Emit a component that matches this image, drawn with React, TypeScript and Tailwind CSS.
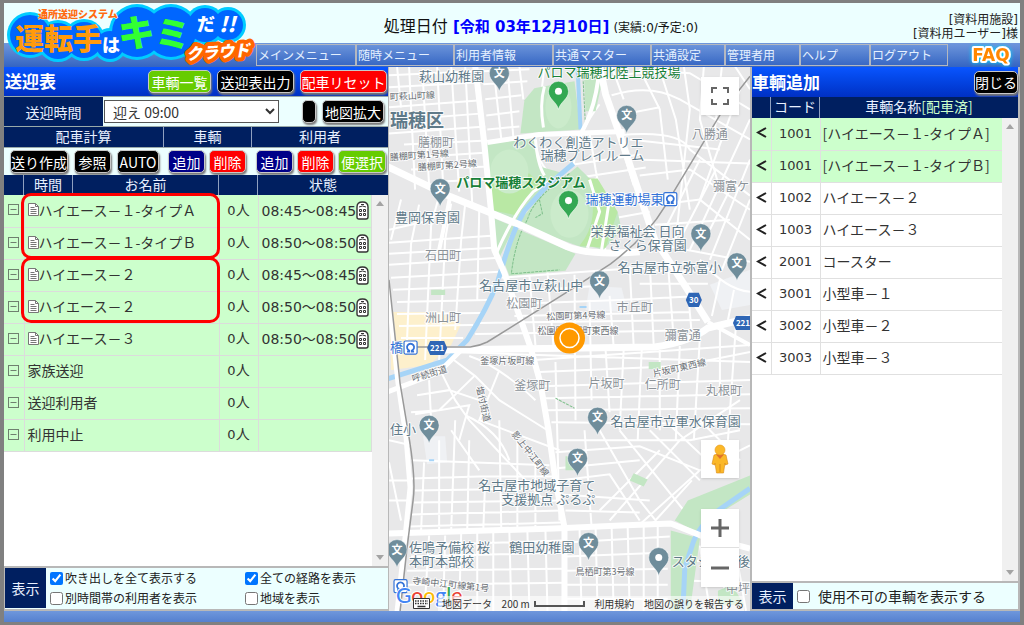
import type { ReactNode } from "react";
import clsx from "clsx";

const menuItems = [
  { label: "メインメニュー", width: "w-[98px]" },
  { label: "随時メニュー", width: "w-[98px]" },
  { label: "利用者情報", width: "w-[99px]" },
  { label: "共通マスター", width: "w-[98px]" },
  { label: "共通設定", width: "w-[74px]" },
  { label: "管理者用", width: "w-[75px]" },
  { label: "ヘルプ", width: "w-[70px]" },
  { label: "ログアウト", width: "w-[78px]" },
];

const routes = [
  { name: "ハイエース－１-タイプＡ", time: "08:45～08:45" },
  { name: "ハイエース－１-タイプＢ", time: "08:50～08:50" },
  { name: "ハイエース－２", time: "08:45～08:45" },
  { name: "ハイエース－２", time: "08:50～08:50" },
  { name: "ハイエース－３", time: "08:50～08:50" },
  { name: "家族送迎" },
  { name: "送迎利用者" },
  { name: "利用中止" },
];

const vehicles = [
  { code: "1001", name: "[ハイエース－１-タイプＡ]", assigned: true },
  { code: "1001", name: "[ハイエース－１-タイプＢ]", assigned: true },
  { code: "1002", name: "ハイエース－２" },
  { code: "1003", name: "ハイエース－３" },
  { code: "2001", name: "コースター" },
  { code: "3001", name: "小型車－１" },
  { code: "3002", name: "小型車－２" },
  { code: "3003", name: "小型車－３" },
];

const displayOptions = [
  { id: "balloon", label: "吹き出しを全て表示する", checked: true },
  { id: "allRoutes", label: "全ての経路を表示", checked: true },
  { id: "otherTime", label: "別時間帯の利用者を表示", checked: false },
  { id: "area", label: "地域を表示", checked: false },
];

const tones = {
  black: "bg-black",
  green: "bg-[#66cc00]",
  red: "bg-[#ff0000]",
  navy: "bg-[#000088]",
};

function Btn({ tone, width, children, label }: { tone: keyof typeof tones; width: string; children?: ReactNode; label?: string }) {
  return (
    <button
      type="button"
      aria-label={label}
      className={clsx(
        "flex h-[23px] shrink-0 items-center justify-center rounded-[5px] border border-[#c8c8c8] whitespace-nowrap text-white shadow-[1px_2px_2px_#777]",
        tones[tone],
        width
      )}
    >
      {children}
    </button>
  );
}

function Logo() {
  const blobs = [
    [30, 35, 20],
    [58, 41, 18],
    [84, 40, 18],
    [110, 45, 14],
    [137, 32, 25],
    [171, 32, 25],
    [205, 25, 17],
    [228, 25, 15],
  ];
  return (
    <svg viewBox="4 3 256 66" className="absolute top-0 left-0 h-[66px] w-[256px]" role="img" aria-label="運転手はキミだ!!クラウド">
      <g fill="#00ccff">
        {blobs.map(([x, y, r]) => (
          <circle key={x} cx={x} cy={y} r={r + 3} />
        ))}
      </g>
      <g fill="#0066ff">
        {blobs.map(([x, y, r]) => (
          <circle key={x} cx={x} cy={y} r={r} />
        ))}
      </g>
      <g fontWeight="900">
        <text x="38" y="18" fontSize="10" fill="#ff6a10" stroke="#ecffff" strokeWidth="1" paintOrder="stroke">
          通所送迎システム
        </text>
        <text x="15" y="50" fontSize="29" fill="#ff9a0c">
          運転手
        </text>
        <text x="102" y="52" fontSize="18" fill="#fff">
          は
        </text>
        <text x="118" y="47" fontSize="37" fill="#33ff33">
          キ
        </text>
        <text x="155" y="47" fontSize="35" fill="#33ff33">
          ミ
        </text>
        <text x="197" y="31" fontSize="18" fill="#fff">
          だ
        </text>
        <text x="219" y="32" fontSize="21" fill="#fff" fontStyle="italic">
          !!
        </text>
        <text
          x="186"
          y="58"
          fontSize="16"
          fill="#fff"
          stroke="#ff6600"
          strokeWidth="8"
          strokeLinejoin="round"
          paintOrder="stroke"
          fontStyle="italic"
          transform="rotate(-4 216 52)"
        >
          クラウド
        </text>
      </g>
    </svg>
  );
}

function Header() {
  return (
    <header className="relative">
      <div className="relative flex h-10 items-center justify-center bg-[#ecffff] pt-2 pl-[58px] font-['DejaVu_Sans','Noto_Sans_CJK_JP',sans-serif]">
        <p className="whitespace-nowrap text-[#111]">
          <span className="text-base">処理日付 </span>
          <strong className="text-[15px] font-bold text-[#0000ff]">[令和 03年12月10日]</strong>
          <span className="ml-1 text-xs">(実績:0/予定:0)</span>
        </p>
        <p className="absolute right-0.5 bottom-0.5 text-right text-xs leading-[14px] text-[#222]">
          [資料用施設]
          <br />
          [資料用ユーザー]様
        </p>
      </div>
      <nav className="flex h-6 items-center bg-linear-to-b from-[#6f97dc] to-[#3464c2] pl-[252px]">
        <ul className="flex h-[22px] border border-[#b4b8c0]">
          {menuItems.map((item, i) => (
            <li key={item.label} className={clsx(item.width, i > 0 && "border-l-2 border-[#b4b8c0]")}>
              <a href="#" className="block pl-px text-xs leading-5 whitespace-nowrap text-[#e4f0ff]">
                {item.label}
              </a>
            </li>
          ))}
        </ul>
        <a href="#faq" className="ml-auto pr-1" aria-label="FAQ">
          <svg viewBox="0 0 50 24" className="h-6 w-[50px] drop-shadow-[0_0_2px_#00d8ff]">
            <text
              x="25"
              y="18"
              fill="#ff8800"
              stroke="#fff"
              strokeWidth="4"
              strokeLinejoin="round"
              paintOrder="stroke"
              fontSize="17"
              fontWeight="700"
              fontFamily="DejaVu Sans, sans-serif"
              textAnchor="middle"
            >
              FAQ
            </text>
          </svg>
        </a>
      </nav>
      <Logo />
    </header>
  );
}

function CollapseIcon() {
  return (
    <svg viewBox="0 0 11 11" className="mx-auto h-[11px] w-[11px]" fill="none" stroke="#6f806f">
      <rect x="0.5" y="0.5" width="10" height="10" />
      <path d="M2.5 5.5h6" />
    </svg>
  );
}

function NoteIcon() {
  return (
    <svg viewBox="0 0 11 13" className="h-[13px] w-[11px] shrink-0" fill="#fff" stroke="#777">
      <path d="M0.5 0.5h7l3 3v9h-10z" />
      <path d="M7.5 0.5v3h3M2.5 4.5h4M2.5 6.5h6M2.5 8.5h6M2.5 10.5h6" fill="none" />
    </svg>
  );
}

function BusIcon() {
  return (
    <svg viewBox="0 0 13 19" className="h-[19px] w-[13px] shrink-0" fill="none" stroke="#333">
      <path d="M1 16V6Q1 1 6.5 1Q12 1 12 6V16Q12 18 10 18H3Q1 18 1 16z" fill="#fff" strokeWidth="1.4" />
      <path d="M5 3.500h3M3 6q3.500-2 7 0" />
      <path d="M3.500 8.500h2v2h-2zM7.500 8.500h2v2h-2zM3.500 12.500h2v2h-2zM7.500 12.500h2v2h-2z" />
    </svg>
  );
}

function Scrollbar() {
  return (
    <div className="flex w-4 shrink-0 flex-col items-center justify-between bg-[#f0f0f0] py-1.5" aria-hidden="true">
      <svg viewBox="0 0 8 5" className="h-[5px] w-2" fill="#a3a3a3">
        <path d="M0 5L4 0l4 5z" />
      </svg>
      <svg viewBox="0 0 8 5" className="h-[5px] w-2" fill="#a3a3a3">
        <path d="M0 0l4 5 4-5z" />
      </svg>
    </div>
  );
}

function RoutePanel() {
  return (
    <section className="flex w-[385px] shrink-0 flex-col border-r border-[#b8b8b8] bg-white text-sm">
      <div className="flex h-[30px] items-center justify-end gap-1.5 border-b border-[#9aa] bg-linear-to-b from-[#0a55ff] to-[#0030c4] pr-px">
        <h2 className="mr-auto pl-px text-[17px] font-bold text-white">送迎表</h2>
        <Btn tone="green" width="w-[63px]">車輌一覧</Btn>
        <Btn tone="black" width="w-[77px]">送迎表出力</Btn>
        <Btn tone="red" width="w-[87px]">配車リセット</Btn>
      </div>
      <div className="flex h-[29px] items-center bg-[#ecffff]">
        <label htmlFor="slot" className="flex h-full w-[99px] items-center justify-center bg-[#001f60] text-[#e8f0ff]">
          送迎時間
        </label>
        <select id="slot" className="ml-px h-[23px] w-[175px] border border-[#555] bg-white pl-1 text-[#333]">
          <option>迎え 09:00</option>
        </select>
        <div className="ml-auto flex gap-1.5 pr-1">
          <Btn tone="black" width="w-[14px]" label="切替" />
          <Btn tone="black" width="w-[62px]">地図拡大</Btn>
        </div>
      </div>
      <div className="grid h-[22px] grid-cols-[160px_88px_1fr] divide-x divide-[#8fa0c0] border-y border-[#9aa] bg-[#001f60] text-center leading-[18px] text-[#e8f0ff]">
        <span>配車計算</span>
        <span>車輌</span>
        <span>利用者</span>
      </div>
      <div className="grid h-[27px] grid-cols-[160px_88px_1fr] items-center bg-[#ecffff]">
        <div className="flex gap-1.5 pl-1.5">
          <Btn tone="black" width="w-[58px]">送り作成</Btn>
          <Btn tone="black" width="w-[37px]">参照</Btn>
          <Btn tone="black" width="w-[42px]">AUTO</Btn>
        </div>
        <div className="flex gap-1 pl-1">
          <Btn tone="navy" width="w-[37px]">追加</Btn>
          <Btn tone="red" width="w-[37px]">削除</Btn>
        </div>
        <div className="flex gap-1 pl-1">
          <Btn tone="navy" width="w-[37px]">追加</Btn>
          <Btn tone="red" width="w-[37px]">削除</Btn>
          <Btn tone="green" width="w-[48px]">便選択</Btn>
        </div>
      </div>
      <div className="grid h-5 grid-cols-[20px_49px_146px_39px_1fr] divide-x divide-[#8fa0c0] bg-[#001f60] text-center leading-[18px] text-[#e8f0ff]">
        <span />
        <span>時間</span>
        <span>お名前</span>
        <span />
        <span>状態</span>
      </div>
      <div className="relative flex flex-1">
        <div className="flex-1">
          <table className="w-full table-fixed border-collapse text-[#333]">
            <colgroup>
              <col className="w-5" />
              <col className="w-[195px]" />
              <col className="w-[39px]" />
              <col />
            </colgroup>
            <tbody>
              {routes.map((route, i) => (
                <tr key={i} className="h-8 border-b border-[#dcdcdc] bg-[#ccffcc]">
                  <td className="border-r border-[#dcdcdc] pb-0.5">
                    <CollapseIcon />
                  </td>
                  <td className="border-r border-[#dcdcdc] pb-0.5">
                    <span className="flex items-center pl-[3px] whitespace-nowrap">
                      {route.time && <NoteIcon />}
                      {route.name}
                    </span>
                  </td>
                  <td className="border-r border-[#dcdcdc] pb-0.5 text-center">
                    <span className="font-['DejaVu_Sans',sans-serif] text-[13px]">0</span>人
                  </td>
                  <td className="border-r border-[#dcdcdc]">
                    {route.time && (
                      <span className="flex items-center pl-[3px] font-['DejaVu_Sans','Noto_Sans_CJK_JP',sans-serif] whitespace-nowrap">
                        {route.time}
                        <BusIcon />
                      </span>
                    )}
                  </td>
                </tr>
              ))}
            </tbody>
          </table>
        </div>
        <Scrollbar />
        {/* highlight frames around the paired vehicles */}
        <div className="pointer-events-none absolute -top-0.5 left-[17px] h-[66px] w-[199px] rounded-[10px] border-3 border-[#ff0000]" />
        <div className="pointer-events-none absolute top-[62px] left-[17px] h-[66px] w-[199px] rounded-[10px] border-3 border-[#ff0000]" />
      </div>
      <fieldset className="flex h-[45px] shrink-0 border-y-2 border-l border-[#b8b8b8] bg-[#ecffff] text-xs text-[#222]">
        <div className="flex w-[41px] items-center justify-center bg-[#001f60] text-sm text-[#e8f0ff]">表示</div>
        <div className="grid flex-1 grid-cols-[195px_1fr] items-center pl-1">
          {displayOptions.map((option) => (
            <label key={option.id} className="flex items-center gap-0.5 leading-5">
              <input type="checkbox" defaultChecked={option.checked} className="h-[13px] w-[13px] accent-[#0075ff]" />
              {option.label}
            </label>
          ))}
        </div>
      </fieldset>
    </section>
  );
}

const minorStreets = [
  // north west blocks
  "M390 76L478 72M390 88L480 83M390 108L482 101M405 120L484 114M390 134L486 127M405 145L488 141M412 158L489 153M412 170L490 167M440 182L491 180",
  "M398 67L402 108M410 67L416 190M424 84L430 186M438 67L444 186M452 67L460 192M466 67L473 204",
  "M484 72L530 70M484 85L528 82M486 100L522 96M487 116L520 112M488 130L520 127M494 67L502 140M508 67L514 138M520 67L524 100",
  "M390 230L425 222M390 243L492 236M390 254L494 248M390 265L500 258M392 278L500 272M394 290L494 286M398 302L488 300M398 314L482 313M400 326L474 325M402 338L464 338",
  "M402 200L392 240M420 205L412 244L408 340M440 196L432 226L426 360M452 204L446 240L440 360M466 204L462 240L456 330M480 210L478 300",
  // around the parks
  "M545 67Q540 100 544 128M600 105Q580 130 574 165M586 70L592 110M535 140Q540 172 560 180M590 134L596 170L604 212M618 134L634 186M574 165L640 155M580 178L646 168M598 200L640 196M606 220L650 212M596 178L606 252",
  // north east
  "M604 80Q640 70 690 74L750 110M612 96Q650 84 680 100L750 140M618 116L660 108M630 140L720 150M636 160L750 164M640 176L690 170L750 210M650 206L700 200L750 240M655 225L730 220M660 245L750 262",
  "M640 70L660 110L668 180M660 70L676 120L690 210M684 67L690 110L676 240M704 67L700 120L720 190M722 67L715 130M740 90L700 200M750 120L690 250M750 160L710 260M735 67L750 90M750 200L722 270M612 67L624 100",
  "M618 136Q680 130 690 150L750 196M700 160L665 230M716 170L680 240M735 180L700 250",
  // centre
  "M500 278L640 268M510 292L600 286M512 304L620 300L700 296M515 316L690 312M480 323L700 320M476 334L710 330M530 275L536 345M548 272L554 346M575 275L576 420M590 300L592 400M610 296L614 346M630 266L634 346M650 262L654 346M668 262L674 340M688 290L692 335",
  "M640 268Q680 276 716 268M640 284L708 284M720 330L720 390M700 260Q726 290 750 292M720 280L712 316M734 290L728 320",
  // south of the main road
  "M452 352L750 362M535 360L750 345M540 372L680 366L750 352M542 386L750 380M545 398L750 394M548 410L750 408M552 422L750 424M556 362L560 520M606 350L610 412M624 350L620 430M642 350L638 440M660 350L660 430M680 346L676 440M700 338L694 440M736 325L728 440",
  "M452 358L476 376L500 400L548 430M470 356Q500 366 536 400M440 368L456 400L470 420L545 500M430 380L432 420M418 395L450 390L480 400M416 414L470 405L460 440M475 376L440 410L412 412M500 370L480 420L560 450",
  // south west
  "M390 440L412 445M412 460L470 462L550 465M412 478L480 476L556 476M416 490L558 488M415 502L560 500M412 514L562 510M410 526L562 522M425 462L422 530M440 440L440 530M456 420L452 530M470 440L468 530M486 478L484 530M500 420L502 530M518 440L518 530M536 460L536 530M390 462L402 520M390 480L412 480M390 500L412 500",
  "M452 430L480 470M466 415Q500 430 510 460M412 545L564 540M412 556L565 552M408 570L565 568M408 584L565 582M430 535L426 600M446 535L444 610M462 532L460 610M478 532L478 610M494 530L494 610M510 530L512 610M528 530L530 610M546 530L548 610",
  // south east
  "M560 440L690 440M556 452L640 446L700 470M558 468L640 460M560 480L610 474L640 520M562 494L650 500M566 510L640 512M585 430L592 526M600 430L640 500L660 525M620 430L684 510M650 430L700 480M670 425L720 472M700 420L740 460M610 520L680 440L740 400M600 510L660 450M640 524L700 470L750 445M652 524L692 480M690 440L740 430",
  "M566 542L670 536M566 556L668 552M566 570L668 568M566 584L668 584M566 598L668 598M580 528L582 610M596 526L598 610M612 526L614 610M628 526L630 610M644 526L644 610M658 526L658 610M700 545L710 610M716 540L728 610M734 540L746 610M695 560L750 566M692 580L750 582",
];

type MapLabel = { text: string; x: number; y: number; size?: number; kind?: "poi" | "area" | "road" | "park" | "station"; rotate?: number; bold?: boolean };

const labelColors = {
  poi: "#5f7a89",
  area: "#8b9298",
  road: "#6a6f74",
  park: "#188038",
  station: "#3473d8",
};

const labels: MapLabel[] = [
  { text: "萩山幼稚園", x: 420, y: 82 },
  { text: "パロマ瑞穂北陸上競技場", x: 538, y: 78, kind: "park" },
  { text: "町萩山町線", x: 391, y: 101, size: 9, kind: "road", rotate: -3 },
  { text: "瑞穂区", x: 391, y: 128, size: 18, bold: true },
  { text: "膳棚町", x: 419, y: 148, size: 12, kind: "area" },
  { text: "膳棚町第1号線", x: 391, y: 161, size: 9, kind: "road", rotate: -4 },
  { text: "膳棚町第2号線", x: 419, y: 171, size: 9, kind: "road", rotate: -4 },
  { text: "わくわく創造アトリエ", x: 514, y: 148 },
  { text: "瑞穂プレイルーム", x: 541, y: 161 },
  { text: "パロマ瑞穂スタジアム", x: 457, y: 187, kind: "park", bold: true },
  { text: "瑞穂運動場東", x: 586, y: 204, kind: "station" },
  { text: "豊岡保育園", x: 396, y: 222 },
  { text: "石田町", x: 426, y: 260, size: 12, kind: "area" },
  { text: "八勝通", x: 692, y: 140, size: 12, kind: "area" },
  { text: "彌富ケ", x: 713, y: 191, size: 12, kind: "area" },
  { text: "栄寿福祉会 日向", x: 591, y: 236 },
  { text: "さくら保育園", x: 609, y: 250 },
  { text: "名古屋市立弥富小", x: 618, y: 272 },
  { text: "名古屋市立萩山中", x: 480, y: 290 },
  { text: "松園町", x: 507, y: 308, size: 12, kind: "area" },
  { text: "市丘町", x: 617, y: 312, size: 12, kind: "area" },
  { text: "洲山町", x: 426, y: 322, size: 12, kind: "area" },
  { text: "松園町第4号線", x: 547, y: 320, size: 9, kind: "road", rotate: -2 },
  { text: "松園町名塚町東西線", x: 538, y: 334, size: 9, kind: "road" },
  { text: "彌富通", x: 665, y: 340, size: 12, kind: "area" },
  { text: "橋", x: 391, y: 352, kind: "station" },
  { text: "釜塚片坂町線", x: 481, y: 364, size: 9, kind: "road" },
  { text: "片坂町東西線", x: 654, y: 377, size: 9, kind: "road", rotate: -13 },
  { text: "呼続街道", x: 414, y: 382, size: 9, kind: "road", rotate: -17 },
  { text: "釜塚町", x: 515, y: 390, size: 12, kind: "area" },
  { text: "片坂町", x: 589, y: 388, size: 12, kind: "area" },
  { text: "仁所町", x: 645, y: 389, size: 12, kind: "area" },
  { text: "丸根町", x: 706, y: 395, size: 12, kind: "area" },
  { text: "塩付街道", x: 477, y: 387, size: 9, kind: "road", rotate: 77 },
  { text: "影上中江町線", x: 512, y: 434, size: 9, kind: "road", rotate: 52 },
  { text: "名古屋市立軍水保育園", x: 611, y: 426 },
  { text: "住小", x: 391, y: 434 },
  { text: "名古屋市地域子育て", x: 479, y: 490 },
  { text: "支援拠点 ぷるぷ", x: 502, y: 504 },
  { text: "佐鳴予備校 桜", x: 410, y: 551 },
  { text: "本町本部校", x: 410, y: 565 },
  { text: "鶴田幼稚園", x: 510, y: 551 },
  { text: "鳥栖町第3号線", x: 576, y: 574, size: 9, kind: "road" },
  { text: "スタジ", x: 672, y: 565 },
  { text: "後", x: 737, y: 565 },
  { text: "寺崎中江町線第1号", x: 413, y: 583, size: 9, kind: "road", rotate: 6 },
  { text: "中坪", x: 726, y: 592, size: 12, kind: "area" },
];

const schoolPins = [
  [500, 74],
  [627, 116],
  [441, 189],
  [701, 234],
  [737, 263],
  [600, 281],
  [598, 417],
  [430, 425],
  [578, 458],
  [589, 542],
  [398, 549],
];

function Pin({ x, y, fill, school }: { x: number; y: number; fill: string; school?: boolean }) {
  return (
    <g transform={`translate(${x} ${y})`}>
      <path d="M0 18C-2 10-10 8-10 0A10 10 0 0 1 10 0C10 8 2 10 0 18z" fill={fill} stroke="#fff" strokeWidth="0.5" />
      {school ? (
        <text y="4" fontSize="11" fontWeight="bold" fill="#fff" textAnchor="middle">
          文
        </text>
      ) : (
        <circle r="3.500" fill="#fff" />
      )}
    </g>
  );
}

function StationMark({ x, y }: { x: number; y: number }) {
  return (
    <g transform={`translate(${x} ${y})`} fill="none" stroke="#3473d8">
      <rect width="13" height="13" rx="1.5" fill="#fff" strokeWidth="1.2" />
      <path d="M3 10.500h2.200V9.500A3.500 3.500 0 1 1 7.800 9.500V10.500H10" strokeWidth="1.800" />
    </g>
  );
}

function Shield({ x, y, text }: { x: number; y: number; text: string }) {
  const w = text.length > 2 ? 10 : 8;
  return (
    <g transform={`translate(${x} ${y})`}>
      <path d={`M${-w} 0L${-w + 3} -7H${w - 3}L${w} 0L${w - 3} 7H${-w + 3}z`} fill="#2f66b5" />
      <text y="3" fontSize="8" fontWeight="bold" fill="#fff" textAnchor="middle">
        {text}
      </text>
    </g>
  );
}

function MapDrawing() {
  return (
    <svg viewBox="390 67 360 544" preserveAspectRatio="xMidYMid slice" className="absolute inset-0 h-full w-full" role="img" aria-label="地図">
      <rect x="380" y="57" width="380" height="564" fill="#e8e8e9" />
      <path d="M391 312L440 312L462 324L452 345L430 365L392 370z" fill="#fdf0cc" />
      <g fill="#eff1f4">
        <path d="M590 286L622 288L628 312L586 310z" />
        <path d="M710 285L750 270V305L722 310z" />
        <path d="M424 436H446L448 462L428 464z" />
      </g>
      <g fill="none" stroke="#fff" strokeWidth="2">
        {minorStreets.map((d) => (
          <path key={d} d={d} />
        ))}
      </g>
      <g fill="#c3e6c4">
        <path d="M521 134L525 101L535 89L545 87L575 82L581 130z" />
        <path d="M584 67H606L596 112L586 112z" />
        <path d="M486 144L535 139L540 167L565 174L525 211L516 222L491 214z" />
        <path d="M578 167L590 179L598 214L586 249L518 224L540 198z" />
        <path d="M515 228L576 254L566 271L510 276L503 258z" />
        <path d="M491 217L515 227L500 258L495 250z" />
        <path d="M618 212L622 230L604 250L588 246z" />
        <path d="M675 520L688 500L750 475V494L721 512L698 532z" />
        <path d="M671 530L700 538L690 611H671z" />
        <path d="M432 290h14v5h-14zM649 362h12v7h-12zM634 473l14 6l-4 7l-14-6zM566 456h10v14h-10zM718 590l14-6l12 20h-26z" />
      </g>
      <g fill="#b9e8a4">
        <path d="M490 176L530 174L540 184L518 216L491 210z" />
        <path d="M588 179L598 179L618 212L606 248L580 246Q602 220 588 179z" />
      </g>
      <g fill="#cbebcb">
        <ellipse cx="510" cy="172" rx="19" ry="22" />
        <ellipse cx="570" cy="214" rx="19" ry="24" />
        <ellipse cx="559" cy="108" rx="13" ry="21" />
      </g>
      <g fill="none" stroke="#fff" strokeWidth="3">
        <path d="M545 87Q540 105 544 128M536 140Q538 165 545 176M590 180L600 212L588 248M610 199L602 250M598 198L614 206" />
        <path d="M568 170L534 192Q514 214 496 256" />
      </g>
      <g fill="none" stroke="#a6d4f7" strokeWidth="5">
        <path d="M578 67L581 130" strokeWidth="4" />
        <path d="M574 164L548 186L525 211Q514 230 505 260L498 283Q488 308 468 340L448 360L388 379" />
        <path d="M750 488L721 508Q700 524 694 540L685 567L683 611" />
        <path d="M580 307h7M430 460h5" strokeWidth="2" />
      </g>
      <path d="M583 70L586 128M570 174Q534 198 528 220Q516 240 512 274L560 270M556 398L575 408M540 200L543 214L536 218" fill="none" stroke="#7fc08c" strokeDasharray="3 1" />
      <g fill="none" stroke="#fff" strokeWidth="5" strokeLinejoin="round">
        <path d="M600 67L606 95L620 135L640 195L655 240Q670 262 684 284L708 322" strokeWidth="7" />
        <path d="M488 143L540 135L625 132" />
        <path d="M476 67L485 144L492 214L495 250L505 273L518 310L531 347L541 383L549 430L556 480L565 527V611" strokeWidth="6" />
        <path d="M388 167L451 197L518 224L568 247Q590 256 640 252" strokeWidth="7" />
        <path d="M440 350L655 347Q690 342 708 328L750 318" strokeWidth="7" />
        <path d="M388 392L440 372L462 350" />
        <path d="M388 533L555 528L621 525L671 523L701 535L750 548" strokeWidth="6" />
        <path d="M388 280L399 383L407 437L411 487L405 547L398 611" strokeWidth="5" />
        <path d="M708 322L750 345M451 197L438 260M600 67Q596 120 570 150" strokeWidth="4" />
      </g>
      <g fill="none" stroke="#999" strokeWidth="1.500">
        <path d="M390 280L401 383L410 437Q417 480 414 500L408 547L401 611" />
        <path d="M418 347H471Q480 346 488 342L571 290L611 264Q648 236 665 207L721 114L750 77" />
      </g>
      <g stroke="#fff" strokeOpacity="0.8" strokeWidth="2" strokeLinejoin="round" paintOrder="stroke">
        {labels.map((label) => (
          <text
            key={label.text + label.y}
            x={label.x}
            y={label.y}
            fontSize={label.size ?? 13}
            fontWeight={label.bold ? 700 : 400}
            fill={labelColors[label.kind ?? "poi"]}
            transform={label.rotate ? `rotate(${label.rotate} ${label.x} ${label.y})` : undefined}
          >
            {label.text}
          </text>
        ))}
      </g>
      {schoolPins.map(([x, y]) => (
        <Pin key={`${x}-${y}`} x={x} y={y} fill="#6f8d9b" school />
      ))}
      <Pin x={659} y={557} fill="#6f8d9b" />
      <Pin x={559} y={92} fill="#34a853" />
      <Pin x={569} y={201} fill="#34a853" />
      <StationMark x={664} y={193} />
      <StationMark x={405} y={341} />
      <StationMark x={395} y={579} />
      <Shield x={438} y={348} text="221" />
      <Shield x={743} y={323} text="221" />
      <Shield x={694} y={300} text="30" />
      <circle cx="570" cy="338" r="15.500" fill="#ff9900" />
      <circle cx="570" cy="338" r="9.500" fill="none" stroke="#fff" strokeWidth="1.500" />
      <text x="397" y="602" fontSize="21" fontWeight="500" fontFamily="Lato, sans-serif" stroke="#fff" strokeWidth="2" paintOrder="stroke">
        <tspan fill="#4285f4">G</tspan>
        <tspan fill="#ea4335">o</tspan>
        <tspan fill="#fbbc05">o</tspan>
        <tspan fill="#4285f4">g</tspan>
        <tspan fill="#34a853">l</tspan>
        <tspan fill="#ea4335">e</tspan>
      </text>
    </svg>
  );
}

function MapPanel() {
  return (
    <section className="relative min-w-0 flex-1 overflow-hidden">
      <MapDrawing />
      <button type="button" aria-label="全画面表示" className="absolute top-2.5 right-[11px] flex size-[38px] items-center justify-center bg-white shadow">
        <svg viewBox="0 0 18 18" className="size-[18px]" fill="#666">
          <path d="M0 0v6h2V2h4V0zM18 0h-6v2h4v4h2zM18 18v-6h-2v4h-4v2zM2 12H0v6h6v-2H2z" />
        </svg>
      </button>
      <div className="absolute right-[11px] bottom-[24px] flex flex-col gap-[31px]">
        <button type="button" aria-label="ストリートビュー" className="flex size-[38px] items-center justify-center bg-white shadow">
          <svg viewBox="0 0 18 30" className="h-[30px] w-[18px]">
            <path d="M3 11Q9 8 15 11L17 20L14 21V19L12.500 29H5.500L4 19V21L1 20z" fill="#fbb829" stroke="#d98a1a" strokeWidth="0.600" />
            <path d="M5 10.500L9 15L13 10.500z" fill="#e0702c" />
            <circle cx="9" cy="6" r="5" fill="#fbb829" stroke="#e59a20" strokeWidth="0.600" />
            <path d="M9 20v8" stroke="#d98a1a" />
          </svg>
        </button>
        <div className="flex w-[38px] flex-col divide-y divide-[#e0e0e0] bg-white shadow">
          <button type="button" aria-label="拡大" className="flex h-[39px] items-center justify-center">
            <svg viewBox="0 0 18 18" className="size-[18px]" fill="#666">
              <path d="M7.500 0h3v7.500H18v3h-7.500V18h-3v-7.500H0v-3h7.500z" />
            </svg>
          </button>
          <button type="button" aria-label="縮小" className="flex h-[39px] items-center justify-center">
            <svg viewBox="0 0 18 18" className="size-[18px]" fill="#666">
              <path d="M0 7.500h18v3H0z" />
            </svg>
          </button>
        </div>
      </div>
      <div className="absolute right-0 bottom-0 left-6 flex h-[15px] items-center pr-1.5 text-[10px] leading-[15px] whitespace-nowrap text-[#333]">
        <svg viewBox="0 0 17 11" className="h-[11px] w-[17px] shrink-0">
          <path d="M0.500 0.500h16v10h-16z" fill="#fff" stroke="#333" />
          <path d="M2 3h13M2 5.500h13" stroke="#333" strokeWidth="1.500" strokeDasharray="1.500 1" />
          <path d="M4.500 8.500h8" stroke="#333" strokeWidth="1.500" />
        </svg>
        <div className="ml-2 flex flex-1 items-center justify-between bg-white/60 pl-1">
          <span>地図データ</span>
          <span className="flex items-center gap-1">
            200 m
            <span className="h-1.5 w-[51px] border-x-2 border-b-2 border-[#555]" />
          </span>
          <a href="#terms">利用規約</a>
          <a href="#report">地図の誤りを報告する</a>
        </div>
      </div>
    </section>
  );
}

function VehiclePanel() {
  return (
    <section className="flex w-[270px] shrink-0 flex-col border-x-2 border-[#b8b8b8] bg-white text-sm">
      <div className="flex h-[30px] items-center justify-between bg-linear-to-b from-[#0a55ff] to-[#0030c4]">
        <h2 className="text-[17px] font-bold text-white">車輌追加</h2>
        <Btn tone="black" width="w-[44px]">閉じる</Btn>
      </div>
      <div className="grid h-[21px] grid-cols-[19px_49px_1fr] divide-x divide-[#8fa0c0] bg-[#001f60] text-center leading-[18px] text-[#e8f0ff]">
        <span />
        <span>コード</span>
        <span>
          車輌名称<span className="text-[#ccffcc]">[配車済]</span>
        </span>
      </div>
      <div className="flex flex-1">
        <div className="flex-1">
          <table className="w-full table-fixed border-collapse text-[#333]">
            <colgroup>
              <col className="w-[19px]" />
              <col className="w-[49px]" />
              <col />
            </colgroup>
            <tbody>
              {vehicles.map((vehicle, i) => (
                <tr key={i} className={clsx("h-8 border-b border-[#e0e0e0]", vehicle.assigned && "bg-[#ccffcc]")}>
                  <td className="border-r border-[#e0e0e0] pb-0.5">
                    <button type="button" aria-label={`${vehicle.name}を追加`} className="mx-auto flex">
                      <svg viewBox="0 0 11 11" className="size-[11px]" fill="none" stroke="#222" strokeWidth="2">
                        <path d="M10 1L2 5.500l8 4.500" />
                      </svg>
                    </button>
                  </td>
                  <td className="border-r border-[#e0e0e0] pb-0.5 text-center">
                    <span className="font-['DejaVu_Sans',sans-serif] text-[13px]">{vehicle.code}</span>
                  </td>
                  <td className="pb-0.5 pl-0.5 whitespace-nowrap">{vehicle.name}</td>
                </tr>
              ))}
            </tbody>
          </table>
        </div>
        <Scrollbar />
      </div>
      <div className="flex h-[30px] shrink-0 border-y-2 border-[#b8b8b8] bg-[#ecffff]">
        <div className="flex w-[41px] items-center justify-center bg-[#001f60] text-[#e8f0ff]">表示</div>
        <label className="flex items-center gap-2 pl-1 text-[#222]">
          <input type="checkbox" className="h-[13px] w-[13px] accent-[#0075ff]" />
          使用不可の車輌を表示する
        </label>
      </div>
    </section>
  );
}

export default function App() {
  return (
    <div className="flex min-h-screen flex-col border-x-4 border-y-3 border-[#808080] bg-[#ecffff] font-['Noto_Sans_CJK_JP',sans-serif]">
      <Header />
      <main className="flex flex-1">
        <RoutePanel />
        <MapPanel />
        <VehiclePanel />
      </main>
      <footer className="h-[11px] bg-linear-to-b from-[#6f97dc] to-[#5580cf]" />
    </div>
  );
}
